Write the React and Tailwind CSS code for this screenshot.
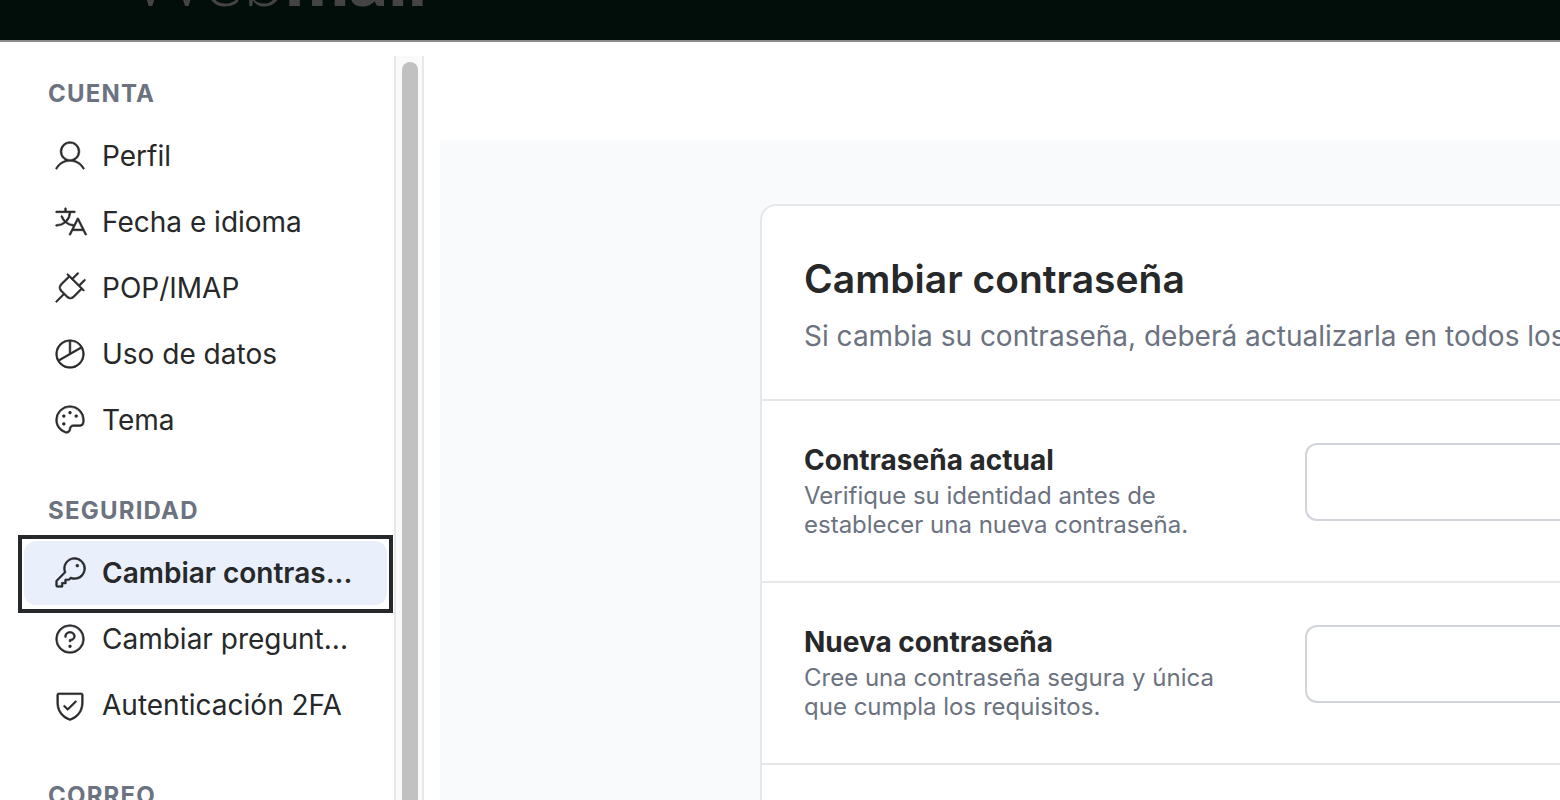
import {
  PiChartPieLight,
  PiKeyLight,
  PiPaletteLight,
  PiPlugLight,
  PiQuestionLight,
  PiShieldCheckLight,
  PiTranslateLight,
  PiUserLight,
} from "react-icons/pi";

const sections = [
  {
    title: "CUENTA",
    items: [
      { id: "perfil", label: "Perfil", icon: PiUserLight },
      { id: "idioma", label: "Fecha e idioma", icon: PiTranslateLight },
      { id: "pop", label: "POP/IMAP", icon: PiPlugLight },
      { id: "datos", label: "Uso de datos", icon: PiChartPieLight },
      { id: "tema", label: "Tema", icon: PiPaletteLight },
    ],
  },
  {
    title: "SEGURIDAD",
    items: [
      { id: "password", label: "Cambiar contras...", icon: PiKeyLight, active: true },
      { id: "preguntas", label: "Cambiar pregunt...", icon: PiQuestionLight },
      { id: "2fa", label: "Autenticación 2FA", icon: PiShieldCheckLight },
    ],
  },
  { title: "CORREO", items: [] },
];

const fields = [
  {
    id: "current",
    label: "Contraseña actual",
    hint: "Verifique su identidad antes de establecer una nueva contraseña.",
  },
  {
    id: "new",
    label: "Nueva contraseña",
    hint: "Cree una contraseña segura y única que cumpla los requisitos.",
  },
];

function NavItem({ item }) {
  const Icon = item.icon;
  return (
    <a
      href={`#${item.id}`}
      className={`block h-[66px] ${item.active ? "outline-4 outline-offset-2 outline-[#25292c]" : ""}`}
    >
      <span
        className={`flex h-16 items-center gap-3.5 rounded-xl pl-7 whitespace-nowrap ${
          item.active ? "bg-[#e9f0fb] font-semibold" : ""
        }`}
      >
        <Icon className="size-9 shrink-0 stroke-4" />
        {item.label}
      </span>
    </a>
  );
}

function Sidebar() {
  return (
    <nav className="w-[394px] shrink-0 overflow-hidden pt-[5px] pr-[7px] pl-6 text-[28px]">
      {sections.map((s) => (
        <section key={s.title} className="mb-6">
          <h2 className="flex h-[63px] items-center pt-0.5 pl-6 text-2xl font-bold tracking-wider text-[#6b7280]">
            {s.title}
          </h2>
          {s.items.map((item) => (
            <NavItem key={item.id} item={item} />
          ))}
        </section>
      ))}
    </nav>
  );
}

function FieldRow({ field }) {
  return (
    <div className="flex items-start gap-14 border-b-2 border-[#e5e7eb] py-[42px] pl-[42px]">
      <div className="w-[445px] shrink-0">
        <label htmlFor={field.id} className="block text-[28px] leading-[34px] font-bold">
          {field.label}
        </label>
        <p className="mt-1 text-2xl leading-[29px] text-[#6b7280]">{field.hint}</p>
      </div>
      <input
        id={field.id}
        type="password"
        className="h-[78px] min-w-0 flex-1 rounded-l-xl border-2 border-r-0 border-[#d1d5db] bg-white px-6"
      />
    </div>
  );
}

export default function App() {
  return (
    <div className="flex h-screen flex-col overflow-hidden bg-white font-['Inter',sans-serif] text-[#26282a]">
      {/* Barra superior */}
      <header className="flex h-[42px] shrink-0 items-end overflow-hidden border-b-2 border-[#8c8c8c] bg-[#010e0a] pb-[31px] pl-[130px]">
        <span className="font-['Lato',sans-serif] text-[76px] leading-[64px] font-light text-[#454444]">
          Web<b className="font-black">mail</b>
        </span>
      </header>

      <div className="flex min-h-0 flex-1 pt-3.5">
        <Sidebar />

        {/* Barra de desplazamiento */}
        <div className="w-[30px] shrink-0 border-x-2 border-[#e8e8e8] bg-[#fafafa] pt-1.5 pr-1 pl-1.5">
          <div className="h-full rounded-t-full bg-[#c1c1c1]"></div>
        </div>

        <main className="mt-[84px] ml-4 flex min-w-0 flex-1 bg-[#f9fafb] pt-16 pl-80">
          <div className="min-w-0 flex-1 overflow-hidden rounded-tl-2xl border-t-2 border-l-2 border-[#e5e7eb] bg-white">
            <div className="border-b-2 border-[#e5e7eb] pt-[42px] pb-11 pl-[42px] whitespace-nowrap">
              <h1 className="text-[39px] leading-[62px] font-semibold">Cambiar contraseña</h1>
              <p className="mt-[7px] text-[28px] leading-[38px] text-[#6b7280]">
                Si cambia su contraseña, deberá actualizarla en todos los
              </p>
            </div>
            {fields.map((f) => (
              <FieldRow key={f.id} field={f} />
            ))}
          </div>
        </main>
      </div>
    </div>
  );
}
